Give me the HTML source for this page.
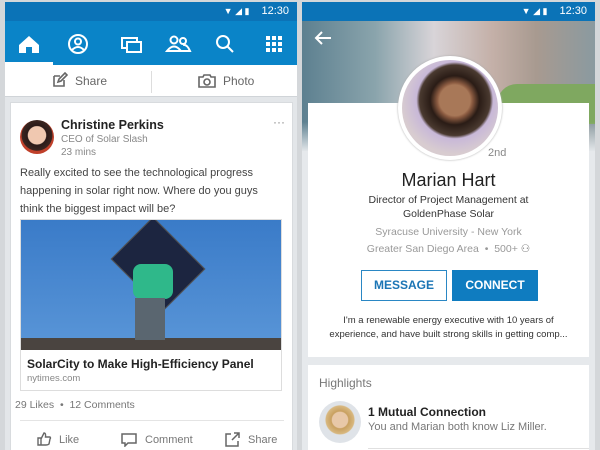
<!DOCTYPE html>
<html><head><meta charset="utf-8"><style>
*{margin:0;padding:0;box-sizing:border-box}
body{width:600px;height:450px;overflow:hidden;background:#d4d7da;font-family:"Liberation Sans",sans-serif;position:relative}
.abs{position:absolute;white-space:nowrap}
.ph{position:absolute;top:2px;height:448px;background:#e3e6e9;overflow:hidden}
.sb{position:absolute;left:0;top:0;right:0;height:19px;background:#0b73b7;color:#fff;font-size:11px;text-align:right;padding:3px 8px 0 0}
</style></head><body>
<!-- LEFT PHONE -->
<div class="ph" style="left:5px;width:292px">
 <div class="sb"><span style="font-size:9px;margin-right:12px">▼ ◢ ▮</span>12:30</div>
 <div class="abs" style="left:0;top:19px;width:292px;height:44px;background:#0a84c8"></div>
 <div class="abs" style="left:0;top:60px;width:48px;height:3px;background:#fff"></div>
 <svg class="abs" style="left:0;top:19px" width="292" height="44" fill="none" stroke="#fff" stroke-width="2">
  <path d="M14 24 L24 15 L34 24 V32 H27 V26 H21 V32 H14 Z" fill="#fff" stroke="none"/>
  <circle cx="73" cy="23" r="9"/><circle cx="73" cy="20.5" r="3"/><path d="M67 29 Q73 23 79 29"/>
  <rect x="117" y="17" width="15" height="10"/><rect x="122" y="21" width="14" height="10" fill="#0a84c8"/>
  <circle cx="169" cy="19" r="3.5"/><circle cx="178" cy="20" r="3"/><path d="M162 30 Q169 21 176 30 Z M174 30 H185 Q182 23 178 24"/>
  <circle cx="218" cy="21" r="6"/><path d="M222 25 L228 31"/>
  <g fill="#fff" stroke="none"><rect x="261" y="15" width="4" height="4"/><rect x="267" y="15" width="4" height="4"/><rect x="273" y="15" width="4" height="4"/><rect x="261" y="21" width="4" height="4"/><rect x="267" y="21" width="4" height="4"/><rect x="273" y="21" width="4" height="4"/><rect x="261" y="27" width="4" height="4"/><rect x="267" y="27" width="4" height="4"/><rect x="273" y="27" width="4" height="4"/></g>
 </svg>
 <div class="abs" style="left:0;top:63px;width:292px;height:32px;background:#fff;border-bottom:1px solid #d0d4d8;color:#666;font-size:12px">
  <div class="abs" style="left:146px;top:6px;width:1px;height:22px;background:#ddd"></div>
  <svg class="abs" style="left:47px;top:7px" width="16" height="16" fill="none" stroke="#666" stroke-width="1.6"><path d="M2 4 H8 M2 4 V14 H12 V8 M6 10 L7 7 L13 1 L15 3 L9 9 Z"/></svg>
  <span class="abs" style="left:70px;top:9px">Share</span>
  <svg class="abs" style="left:193px;top:8px" width="18" height="15" fill="none" stroke="#666" stroke-width="1.6"><path d="M1 4 H5 L6 2 H12 L13 4 H17 V14 H1 Z"/><circle cx="9" cy="9" r="3"/></svg>
  <span class="abs" style="left:218px;top:9px">Photo</span>
 </div>
 <div class="abs" style="left:5px;top:100px;width:283px;height:360px;background:#fff;border:1px solid #d8dbde">
  <div class="abs" style="left:9px;top:17px;width:34px;height:34px;border-radius:50%;background:radial-gradient(circle at 50% 45%,#f0c8b0 0 35%,#2a1a18 38%,#3a2520 60%,#c0402a 62%)"></div>
  <div class="abs" style="left:50px;top:15px;font-size:12.5px;font-weight:bold;color:#222">Christine Perkins</div>
  <div class="abs" style="left:50px;top:31px;font-size:10px;color:#888">CEO of Solar Slash</div>
  <div class="abs" style="left:50px;top:44px;font-size:10px;color:#888">23 mins</div>
  <div class="abs" style="left:262px;top:12px;font-size:12px;color:#888">···</div>
  <div class="abs" style="left:9px;top:61px;width:265px;font-size:11px;line-height:18px;color:#444;white-space:normal">Really excited to see the technological progress<br>happening in solar right now. Where do you guys<br>think the biggest impact will be?</div>
  <div class="abs" style="left:9px;top:116px;width:262px;height:172px;border:1px solid #ddd;overflow:hidden">
   <div class="abs" style="left:0;top:0;width:262px;height:130px;background:linear-gradient(#3a7bc8,#5a96d8)"></div>
   <div class="abs" style="left:0;top:118px;width:262px;height:12px;background:#4a4440"></div>
   <div class="abs" style="left:100px;top:14px;width:74px;height:60px;background:#1c2540;transform:rotate(45deg);border:1px solid #555"></div>
   <div class="abs" style="left:112px;top:44px;width:40px;height:35px;background:#2fb88a;border-radius:8px"></div>
   <div class="abs" style="left:114px;top:78px;width:30px;height:42px;background:#5a6670"></div>
   <div class="abs" style="left:0;top:130px;width:262px;font-size:12px;font-weight:bold;color:#222;padding:7px 0 0 6px">SolarCity to Make High-Efficiency Panel</div>
   <div class="abs" style="left:6px;top:153px;font-size:9.5px;color:#888">nytimes.com</div>
  </div>
  <div class="abs" style="left:4px;top:296px;font-size:10.5px;color:#777">29 Likes &nbsp;•&nbsp; 12 Comments</div>
  <div class="abs" style="left:9px;top:317px;width:264px;height:1px;background:#e4e4e4"></div>
  <svg class="abs" style="left:25px;top:328px" width="16" height="16" fill="none" stroke="#666" stroke-width="1.4"><path d="M2 7 H5 V14 H2 Z M5 8 L8 2 Q10 2 9.5 6 H14 Q15 7 14 8 L13 13 Q12 14 10 14 H5"/></svg>
  <span class="abs" style="left:48px;top:331px;font-size:11px;color:#777">Like</span>
  <svg class="abs" style="left:110px;top:330px" width="16" height="14" fill="none" stroke="#666" stroke-width="1.5"><path d="M1 1 H15 V10 H7 L4 13 V10 H1 Z"/></svg>
  <span class="abs" style="left:134px;top:331px;font-size:11px;color:#777">Comment</span>
  <svg class="abs" style="left:214px;top:329px" width="15" height="15" fill="none" stroke="#666" stroke-width="1.5"><path d="M6 2 H1 V14 H13 V9 M9 1 H14 V6 M14 1 L7 8"/></svg>
  <span class="abs" style="left:237px;top:331px;font-size:11px;color:#777">Share</span>
 </div>
</div>
<!-- RIGHT PHONE -->
<div class="ph" style="left:302px;width:293px;background:#e6e9ec">
 <div class="sb"><span style="font-size:9px;margin-right:12px">▼ ◢ ▮</span>12:30</div>
 <div class="abs" style="left:0;top:19px;width:293px;height:130px;background:linear-gradient(90deg,#5d8090 0%,#8aa4ac 25%,#d8d4d8 45%,#c4b0a8 65%,#a89a90 80%,#8a9aa0 100%)"></div>
 <div class="abs" style="left:195px;top:82px;width:98px;height:40px;background:#7fa860;border-radius:20px 0 0 0"></div>
 <div class="abs" style="left:0;top:120px;width:293px;height:30px;background:linear-gradient(rgba(230,233,236,0),#e6e9ec)"></div>
 <svg class="abs" style="left:12px;top:28px" width="18" height="16" fill="none" stroke="#fff" stroke-width="2"><path d="M17 8 H2 M8 2 L2 8 L8 14"/></svg>
 <div class="abs" style="left:6px;top:101px;width:281px;height:254px;background:#fff"></div>
 <div class="abs" style="left:96px;top:54px;width:104px;height:104px;border-radius:50%;background:#fff;box-shadow:0 0 2px #aaa"></div>
 <div class="abs" style="left:100px;top:58px;width:96px;height:96px;border-radius:50%;background:radial-gradient(circle at 55% 42%,#a87858 0 20%,#8a5a40 23%,#2a1c16 32%,#4a3a30 46%,#c8b8d8 50%,#d8ccd0 70%)"></div>
 <div class="abs" style="left:186px;top:145px;font-size:11px;color:#888">2nd</div>
 <div class="abs" style="left:6px;top:168px;width:281px;text-align:center;font-size:18px;color:#222">Marian Hart</div>
 <div class="abs" style="left:6px;top:191px;width:281px;text-align:center;font-size:10.5px;line-height:14px;color:#333">Director of Project Management at<br>GoldenPhase Solar</div>
 <div class="abs" style="left:6px;top:224px;width:281px;text-align:center;font-size:10.5px;color:#999">Syracuse University - New York</div>
 <div class="abs" style="left:6px;top:241px;width:281px;text-align:center;font-size:10.5px;color:#999">Greater San Diego Area &nbsp;•&nbsp; 500+ <span style="color:#777">⚇</span></div>
 <div class="abs" style="left:59px;top:268px;width:86px;height:31px;border:1px solid #2a87c4;color:#1b75b5;font-weight:bold;font-size:12px;text-align:center;line-height:29px">MESSAGE</div>
 <div class="abs" style="left:150px;top:268px;width:86px;height:31px;background:#0f7cc0;color:#fff;font-weight:bold;font-size:12px;text-align:center;line-height:31px">CONNECT</div>
 <div class="abs" style="left:6px;top:312px;width:281px;text-align:center;font-size:9.5px;line-height:14px;color:#333">I'm a renewable energy executive with 10 years of<br>experience, and have built strong skills in getting comp...</div>
 <div class="abs" style="left:6px;top:363px;width:281px;height:90px;background:#fff"></div>
 <div class="abs" style="left:17px;top:374px;font-size:12px;color:#777">Highlights</div>
 <div class="abs" style="left:17px;top:399px;width:42px;height:42px;border-radius:50%;background:radial-gradient(circle at 50% 45%,#e8c8a8 0 25%,#c8a060 28%,#d8b880 45%,#dfe3e8 48%)"></div>
 <div class="abs" style="left:66px;top:403px;font-size:12px;font-weight:bold;color:#222">1 Mutual Connection</div>
 <div class="abs" style="left:66px;top:419px;font-size:11px;color:#777">You and Marian both know Liz Miller.</div>
 <div class="abs" style="left:66px;top:446px;width:221px;height:1px;background:#e0e0e0"></div>
</div>
</body></html>
